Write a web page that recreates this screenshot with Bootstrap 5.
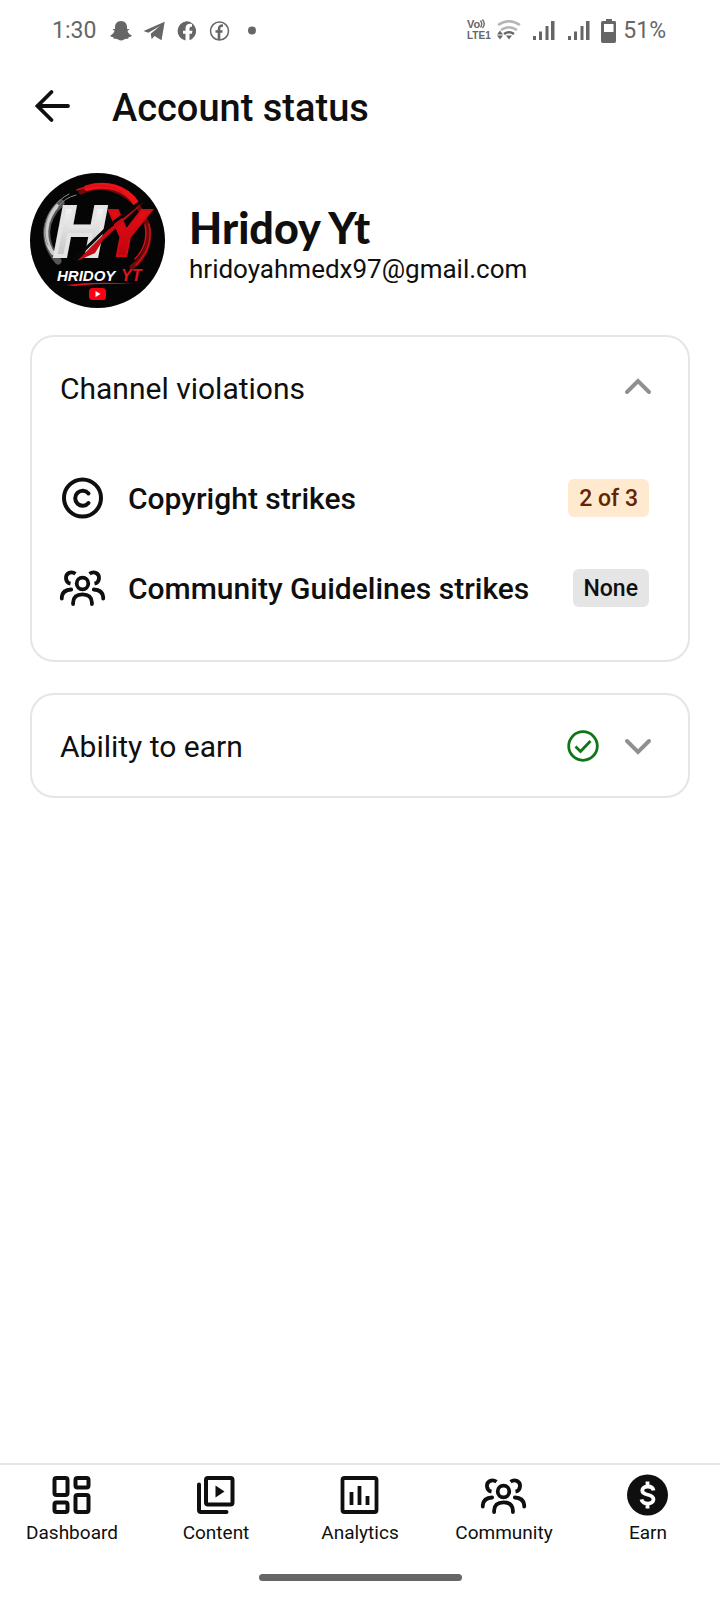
<!DOCTYPE html>
<html lang="en">
<head>
<meta charset="utf-8">
<meta name="viewport" content="width=device-width, initial-scale=1">
<title>Account status</title>
<link href="https://cdn.jsdelivr.net/npm/bootstrap@5.3.0/dist/css/bootstrap.min.css" rel="stylesheet">
<style>
body{font-family:Roboto,"Noto Sans",sans-serif;color:#0f0f0f;background:#fff}
svg{display:block;flex:none;overflow:visible}
.status-bar{height:60px;padding:2px 54px 0 52px;color:#666;font-size:23px;line-height:32px}
.app-bar{height:92px;padding:0 34px;gap:40px}
.app-bar h1{font-size:38px;line-height:44px;font-weight:500}
.back-btn{color:inherit;line-height:0}
.content-area{padding:21px 30px}
.profile{gap:24px;margin-bottom:27px}
.profile-text{padding-top:10px}
.profile-name{font-family:Lato,"Noto Sans",sans-serif;font-size:43px;line-height:46px;font-weight:900}
.profile-mail{font-size:26px;line-height:36px}
.panel{border:2px solid #e5e5e5;border-radius:24px;padding:0 34px 0 28px;margin-bottom:31px}
.panel-toggle{height:101px;font-size:30px;line-height:40px;color:inherit;padding:0}
.panel-toggle svg{color:#909090}
.panel-label{padding-top:2px}
.strike-list{padding:15px 0 27px}
.strike-row{height:90px;gap:24px;font-size:30px;line-height:40px;font-weight:500;color:inherit;margin-right:5px}
.chip{font-size:23px;line-height:28px;font-weight:500;padding:6px 11px 4px;border-radius:6px;background:#e5e5e5;color:#0f0f0f}
.chip-warn{background:#ffe9cf;color:#662500}
.tab-bar{border-top:2px solid #e5e5e5;height:97px;padding-top:6px}
.tab-link{flex:1 1 0;color:inherit;font-size:19px;line-height:24px;gap:2px}
.home-handle{width:203px;height:7px;border-radius:4px;background:#666}
.home-zone{height:40px;padding-top:14px}
</style>
</head>
<body class="d-flex flex-column min-vh-100">
<div class="status-bar d-flex align-items-center justify-content-between">
  <div class="d-flex align-items-center">
    <span class="me-3">1:30</span>
    <svg width="135" height="24" viewBox="1 0 135 24" fill="currentColor" aria-hidden="true">
      <path d="M10 2c4 0 6 3 6 6v2l2 0c.6.5-.3 1.2-1.500 1.700.5 2.500 2.500 4 4.300 4.700-.3 1.200-1.800 1.400-3 1.600l-.6 1.700c-2-.2-3 0-4.200.9-1.800 1.200-4 1.200-5.800 0C6 19.700 5 19.500 2.800 19.700L2.200 18C1 17.800-.5 17.600-.8 16.400 1 15.700 3 14.200 3.500 11.700 2.300 11.200 1.400 10.500 2 10h2V8c0-3 2-6 6-6z"/>
      <path d="M32.500 12 53.700 2.700 50.500 21.300 43.500 17 40.700 20.200 39.700 14.800 49 7 37.300 13.800z"/>
      <path fill-rule="evenodd" d="M75.500 2.300a9.700 9.700 0 0 1 3 18.900v-6.500h2.300l.7-3h-3v-1.900c0-1.400.6-2 2.500-2V5c-4-.8-6.500.6-6.500 4.500v2.200H72v3h2.500v6.800A9.700 9.700 0 0 1 75.500 2.300z"/>
      <circle cx="108.500" cy="12" r="9" fill="none" stroke="currentColor" stroke-width="1.500"/>
      <path d="M108 20.500v-10c0-3 1-4 4-4M104.500 12.500h7" fill="none" stroke="currentColor" stroke-width="2.600"/>
    </svg>
    <svg width="24" height="24" viewBox="1 0 24 24" fill="currentColor" aria-hidden="true"><circle cx="6" cy="11.500" r="4"/></svg>
  </div>
  <div class="d-flex align-items-center">
    <svg width="148" height="28" viewBox="0 2 148 28" fill="currentColor" aria-hidden="true">
      <g font-family="Liberation Sans,sans-serif" font-weight="700"><text x="0" y="13" font-size="11">Vo</text><text x="0" y="24" font-size="10">LTE1</text></g>
      <path d="M13.500 5.500q2.500 3.500 0 7M15.500 4.500q3.500 4.500 0 8.500" fill="none" stroke="currentColor" stroke-width="1.300"/>
      <path d="M31 10q11-7.500 22 0M34 15q8-5.500 16 0" fill="none" stroke="#b5b5b5" stroke-width="2.500"/>
      <path d="M37 19q5-3.500 10 0" fill="none" stroke="currentColor" stroke-width="2.600"/>
      <path d="M39 20.500h6l-3 4zM30 19.500l3-4 3 4zM30 20.500h6l-3 4z"/>
      <path d="M66 21h3v4h-3zM72 16.500h3V25h-3zM78.500 11h3v14h-3zM84 6h3.500v19H84zM101 21h3v4h-3zM107 16.500h3V25h-3zM113.500 11h3v14h-3zM119 6h3.500v19H119z"/>
      <path fill-rule="evenodd" d="M139 4h6v2h3q1 0 1 2v18q0 2-1.500 2h-12q-1.500 0-1.500-2V8q0-2 1.500-2h3.500zM137 9v8h9.500V9z"/>
    </svg>
    <span class="ms-2">51%</span>
  </div>
</div>

<header class="app-bar d-flex align-items-center">
  <button type="button" class="btn back-btn border-0 p-0" aria-label="Back">
    <svg width="38" height="38" viewBox="0 0 38 38" fill="none" stroke="currentColor" stroke-width="3.800" stroke-linecap="round"><path d="M3.500 19H34M17.500 5 3.500 19 17.500 33"/></svg>
  </button>
  <h1 class="mb-0 pt-1">Account status</h1>
</header>

<main class="content-area flex-grow-1">
  <section class="profile d-flex align-items-center">
    <svg width="135" height="135" viewBox="0 0 135 135" role="img" aria-label="Channel avatar">
      <defs>
        <linearGradient id="silver" x2="0" y2="1"><stop stop-color="#fff"/><stop offset="1" stop-color="#b8b8b8"/></linearGradient>
        <linearGradient id="crimson" x2="0" y2="1"><stop stop-color="#f0101a"/><stop offset="1" stop-color="#b50008"/></linearGradient>
      </defs>
      <circle cx="67.500" cy="67.500" r="67.500" fill="#050505"/>
      <g fill="none" stroke-linecap="round">
        <path d="M51 19C77 6 108 23 117 51c5 18-2 34-15 43" stroke="#6e090e" stroke-width="5"/>
        <path d="M57 15c20-6 39 0 49 15" stroke="#ee1118" stroke-width="6"/>
        <path d="M47 17q24-10 45 2M119 51q5 23-13 41M115 52q4 20-10 34" stroke="#d41018" stroke-width="1.500"/>
        <path d="M31 30C12 48 13 70 28 88" stroke="#555" stroke-width="7"/>
        <path d="M27 33C13 49 14 69 23 80" stroke="#ccc" stroke-width="4" stroke-dasharray="18 2 7 1"/>
        <path d="M39 21C16 33 11 58 18 72M46 22q-12 3-18 12" stroke="#888" stroke-width="1"/>
      </g>
      <g font-family="Liberation Sans,sans-serif" font-style="italic" font-weight="700">
        <text x="24" y="83" font-size="70" fill="url(#silver)" stroke="#e4e4e4" stroke-width="4">H</text>
        <text x="73" y="83" font-size="66" fill="url(#crimson)" stroke="#d00b13" stroke-width="2">Y</text>
        <path d="M47 88 78 57 115 28 83 58 73 67 65 80z" fill="#c50b13"/>
        <path d="M44 87 79 53 113 27" stroke="#080808" stroke-width="3" fill="none"/>
        <text x="27" y="108" font-size="15" fill="#fff">HRIDOY</text>
        <text x="91" y="108" font-size="16" fill="#e3131b">YT</text>
      </g>
      <path d="M36 112q32-4 68-1-34-1-60 2z" fill="#ef1118"/>
      <rect x="59" y="115" width="17" height="12" rx="3.500" fill="#fa0010"/><path d="m65.500 118 5 3-5 3z" fill="#fff"/>
    </svg>
    <div class="profile-text">
      <h2 class="profile-name mb-0">Hridoy Yt</h2>
      <div class="profile-mail">hridoyahmedx97@gmail.com</div>
    </div>
  </section>

  <section class="panel">
    <button type="button" class="panel-toggle btn border-0 w-100 d-flex align-items-center justify-content-between" data-bs-toggle="collapse" data-bs-target="#violations" aria-expanded="true" aria-controls="violations">
      <span class="panel-label">Channel violations</span>
      <svg width="32" height="32" viewBox="0 0 32 32" fill="none" stroke="currentColor" stroke-width="4" stroke-linecap="round"><path d="M5 20 16 9 27 20"/></svg>
    </button>
    <div class="collapse show" id="violations">
      <div class="strike-list">
        <a href="#" class="strike-row d-flex align-items-center text-decoration-none">
          <svg width="44" height="44" viewBox="0 0 44 44" fill="none" stroke="currentColor" stroke-width="4"><circle cx="22.500" cy="22" r="18.500"/><path d="M28.500 17.500A7.500 7.500 0 1 0 28.500 27" stroke-linecap="round"/></svg>
          <span class="panel-label flex-grow-1">Copyright strikes</span>
          <span class="chip chip-warn">2 of 3</span>
        </a>
        <a href="#" class="strike-row d-flex align-items-center text-decoration-none">
          <svg width="44" height="44" viewBox="0 0 44 44" fill="none" stroke="currentColor" stroke-width="3.800" stroke-linecap="round"><g id="people"><circle cx="22.500" cy="17.500" r="5.800"/><path d="M13.100 38V36.500Q13.500 28.300 22.500 28.300T31.900 36.500V38M1.800 32.500V31Q2.500 24 11.200 23.500M43.200 32.500V31Q42.500 24 33.800 23.500"/><path d="M15.500 7.700C11 4.500 5.500 7.500 6 12.500 6.300 15.500 8 17.200 10.500 17.700M29.500 7.700C34 4.500 39.500 7.500 39 12.500 38.700 15.500 37 17.200 34.500 17.700" stroke-linecap="butt"/></g></svg>
          <span class="panel-label flex-grow-1">Community Guidelines strikes</span>
          <span class="chip">None</span>
        </a>
      </div>
    </div>
  </section>

  <section class="panel">
    <button type="button" class="panel-toggle btn border-0 w-100 d-flex align-items-center justify-content-between" aria-expanded="false">
      <span class="panel-label">Ability to earn</span>
      <span class="d-flex align-items-center gap-4">
        <svg width="32" height="32" viewBox="0 0 32 32" fill="none" stroke="#107516" stroke-width="2.800"><circle cx="17" cy="16" r="14.300"/><path d="m9.500 16.500 5 5L24.500 11"/></svg>
        <svg width="32" height="32" viewBox="0 0 32 32" fill="none" stroke="currentColor" stroke-width="4" stroke-linecap="round"><path d="M5 11 16 22 27 11"/></svg>
      </span>
    </button>
  </section>
</main>

<nav class="tab-bar d-flex" aria-label="Main">
  <a href="#" class="tab-link d-flex flex-column align-items-center text-decoration-none">
    <svg width="48" height="48" viewBox="0 0 48 48" fill="none" stroke="currentColor" stroke-width="4"><rect x="6.500" y="7" width="13" height="17" rx="2"/><rect x="27.500" y="7" width="13" height="9.500" rx="2"/><rect x="6.500" y="31.500" width="13" height="9.500" rx="2"/><rect x="27.500" y="24" width="13" height="17" rx="2"/></svg>
    Dashboard
  </a>
  <a href="#" class="tab-link d-flex flex-column align-items-center text-decoration-none">
    <svg width="48" height="48" viewBox="0 0 48 48" fill="none" stroke="currentColor" stroke-width="4"><rect x="14" y="7" width="26.500" height="26.500" rx="2"/><path d="M7 13.500V39q0 2 2 2H34.500" stroke-linecap="round"/><path d="m23.500 14.500 9 6-9 6z" fill="currentColor" stroke="none"/></svg>
    Content
  </a>
  <a href="#" class="tab-link d-flex flex-column align-items-center text-decoration-none">
    <svg width="48" height="48" viewBox="0 0 48 48" fill="none" stroke="currentColor" stroke-width="3.800"><rect x="6.500" y="7" width="34" height="34" rx="2"/><path d="M15.500 21v13M23.500 15v19M31.500 25v9"/></svg>
    Analytics
  </a>
  <a href="#" class="tab-link d-flex flex-column align-items-center text-decoration-none">
    <svg width="48" height="48" viewBox="-1 -3 48 48" fill="none" stroke="currentColor" stroke-width="3.800" stroke-linecap="round"><use href="#people"/></svg>
    Community
  </a>
  <a href="#" class="tab-link d-flex flex-column align-items-center text-decoration-none">
    <svg width="48" height="48" viewBox="0 0 48 48" fill="none"><circle cx="23.500" cy="24" r="20.500" fill="currentColor"/><path d="M23.500 10.500v5M23.500 32.500v5M29.500 19.500C28.500 13.800 18.300 14.500 18.300 19.500 18.300 25.500 29.500 22 29.500 28.300 29.500 34 18.500 34 17.500 28.300" stroke="#fff" stroke-width="3.800"/></svg>
    Earn
  </a>
</nav>
<div class="home-zone"><div class="home-handle mx-auto"></div></div>
<script src="https://cdn.jsdelivr.net/npm/bootstrap@5.3.0/dist/js/bootstrap.bundle.min.js"></script>
</body>
</html>
